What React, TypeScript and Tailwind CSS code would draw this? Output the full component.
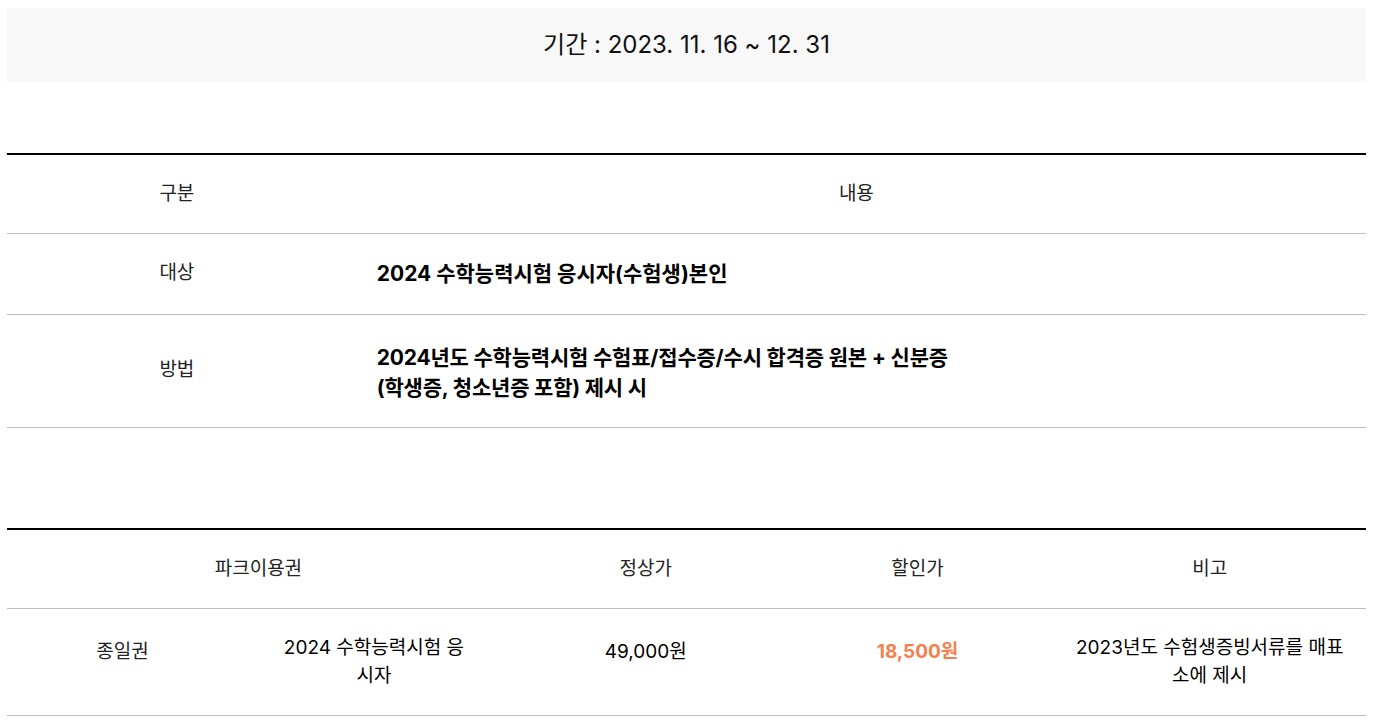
import React from "react";

const font = {
  fontFamily: '"Inter", "Noto Sans CJK KR", sans-serif',
};

const App = () => {
  return (
    <div className="pl-[7px] pr-[11px] pt-2 pb-10 bg-white text-black" style={font}>
      <div className="h-[74px] bg-[#f8f8f8] flex items-center justify-center text-[24px] text-[#111]">
        기간 : 2023. 11. 16 ~ 12. 31
      </div>

      <table className="w-full mt-[71px] border-collapse table-fixed border-t-2 border-black">
        <colgroup>
          <col className="w-1/4" />
          <col />
        </colgroup>
        <thead>
          <tr className="border-b border-[#bdbdbd]">
            <th className="h-[79px] font-normal text-[19px] text-[#222] text-center">구분</th>
            <th className="h-[79px] font-normal text-[19px] text-[#222] text-center">내용</th>
          </tr>
        </thead>
        <tbody>
          <tr className="border-b border-[#bdbdbd]">
            <td className="h-[81px] text-[19px] text-[#222] text-center">대상</td>
            <td className="h-[81px] pl-[30px] text-[21px] font-bold leading-[30px]">
              2024 수학능력시험 응시자(수험생)본인
            </td>
          </tr>
          <tr className="border-b border-[#bdbdbd]">
            <td className="h-[113px] text-[19px] text-[#222] text-center">방법</td>
            <td className="h-[113px] pl-[30px] pt-[4px] text-[21px] font-bold leading-[30px] tracking-[-0.2px] whitespace-nowrap">
              2024년도 수학능력시험 수험표/접수증/수시 합격증 원본 + 신분증
              <br />
              (학생증, 청소년증 포함) 제시 시
            </td>
          </tr>
        </tbody>
      </table>

      <table className="w-full mt-[100px] border-collapse table-fixed border-t-2 border-black">
        <colgroup>
          <col className="w-[17%]" />
          <col className="w-[20%]" />
          <col className="w-[20%]" />
          <col className="w-[20%]" />
          <col className="w-[23%]" />
        </colgroup>
        <thead>
          <tr className="border-b border-[#bdbdbd]">
            <th colSpan={2} className="h-[80px] font-normal text-[19px] text-[#222] text-center">파크이용권</th>
            <th className="h-[80px] font-normal text-[19px] text-[#222] text-center">정상가</th>
            <th className="h-[80px] font-normal text-[19px] text-[#222] text-center">할인가</th>
            <th className="h-[80px] font-normal text-[19px] text-[#222] text-center">비고</th>
          </tr>
        </thead>
        <tbody>
          <tr className="border-b border-[#bdbdbd] text-[19px] leading-[28px]">
            <td className="h-[107px] align-top pt-[29px] text-[#222] text-center">종일권</td>
            <td className="h-[107px] align-top pt-[25px] text-center whitespace-nowrap">
              2024 수학능력시험 응
              <br />
              시자
            </td>
            <td className="h-[107px] align-top pt-[29px] text-center">49,000원</td>
            <td className="h-[107px] align-top pt-[29px] text-center font-bold text-[#f5804e]">18,500원</td>
            <td className="h-[107px] align-top pt-[25px] text-center whitespace-nowrap">
              2023년도 수험생증빙서류를 매표
              <br />
              소에 제시
            </td>
          </tr>
        </tbody>
      </table>
    </div>
  );
};

export default App;
